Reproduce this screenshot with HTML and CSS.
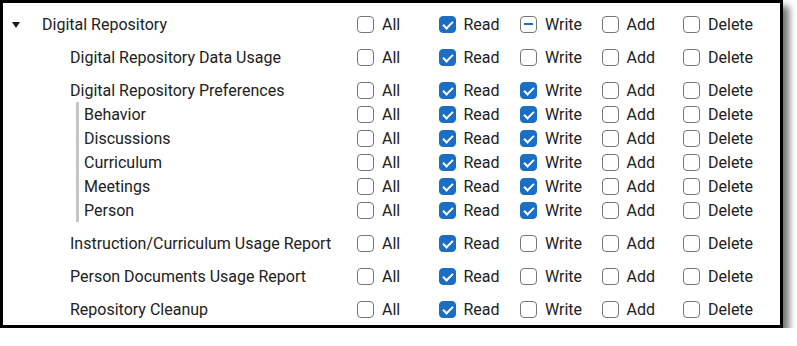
FILE: index.html
```html
<!DOCTYPE html>
<html lang="en">
<head>
    <meta charset="UTF-8">
    <meta name="viewport" content="width=device-width, initial-scale=1.0">
    <link rel="stylesheet" href="styles.css">
</head>
<body>
    <div class="card">
        <!-- Digital Repository -->
        <div class="row top">
            <div class="name lvl1"><span class="caret"></span>Digital Repository</div>
            <div class="perm"><span class="box"></span>All</div>
            <div class="perm"><span class="box checked"></span>Read</div>
            <div class="perm"><span class="box partial"></span>Write</div>
            <div class="perm"><span class="box"></span>Add</div>
            <div class="perm"><span class="box"></span>Delete</div>
        </div>

        <div class="row top">
            <div class="name lvl2">Digital Repository Data Usage</div>
            <div class="perm"><span class="box"></span>All</div>
            <div class="perm"><span class="box checked"></span>Read</div>
            <div class="perm"><span class="box"></span>Write</div>
            <div class="perm"><span class="box"></span>Add</div>
            <div class="perm"><span class="box"></span>Delete</div>
        </div>

        <div class="row top">
            <div class="name lvl2">Digital Repository Preferences</div>
            <div class="perm"><span class="box"></span>All</div>
            <div class="perm"><span class="box checked"></span>Read</div>
            <div class="perm"><span class="box checked"></span>Write</div>
            <div class="perm"><span class="box"></span>Add</div>
            <div class="perm"><span class="box"></span>Delete</div>
        </div>

        <!-- Preferences children -->
        <div class="children">
            <div class="row">
                <div class="name lvl3">Behavior</div>
                <div class="perm"><span class="box"></span>All</div>
                <div class="perm"><span class="box checked"></span>Read</div>
                <div class="perm"><span class="box checked"></span>Write</div>
                <div class="perm"><span class="box"></span>Add</div>
                <div class="perm"><span class="box"></span>Delete</div>
            </div>
            <div class="row">
                <div class="name lvl3">Discussions</div>
                <div class="perm"><span class="box"></span>All</div>
                <div class="perm"><span class="box checked"></span>Read</div>
                <div class="perm"><span class="box checked"></span>Write</div>
                <div class="perm"><span class="box"></span>Add</div>
                <div class="perm"><span class="box"></span>Delete</div>
            </div>
            <div class="row">
                <div class="name lvl3">Curriculum</div>
                <div class="perm"><span class="box"></span>All</div>
                <div class="perm"><span class="box checked"></span>Read</div>
                <div class="perm"><span class="box checked"></span>Write</div>
                <div class="perm"><span class="box"></span>Add</div>
                <div class="perm"><span class="box"></span>Delete</div>
            </div>
            <div class="row">
                <div class="name lvl3">Meetings</div>
                <div class="perm"><span class="box"></span>All</div>
                <div class="perm"><span class="box checked"></span>Read</div>
                <div class="perm"><span class="box checked"></span>Write</div>
                <div class="perm"><span class="box"></span>Add</div>
                <div class="perm"><span class="box"></span>Delete</div>
            </div>
            <div class="row">
                <div class="name lvl3">Person</div>
                <div class="perm"><span class="box"></span>All</div>
                <div class="perm"><span class="box checked"></span>Read</div>
                <div class="perm"><span class="box checked"></span>Write</div>
                <div class="perm"><span class="box"></span>Add</div>
                <div class="perm"><span class="box"></span>Delete</div>
            </div>
        </div>

        <div class="row top">
            <div class="name lvl2">Instruction/Curriculum Usage Report</div>
            <div class="perm"><span class="box"></span>All</div>
            <div class="perm"><span class="box checked"></span>Read</div>
            <div class="perm"><span class="box"></span>Write</div>
            <div class="perm"><span class="box"></span>Add</div>
            <div class="perm"><span class="box"></span>Delete</div>
        </div>

        <div class="row top">
            <div class="name lvl2">Person Documents Usage Report</div>
            <div class="perm"><span class="box"></span>All</div>
            <div class="perm"><span class="box checked"></span>Read</div>
            <div class="perm"><span class="box"></span>Write</div>
            <div class="perm"><span class="box"></span>Add</div>
            <div class="perm"><span class="box"></span>Delete</div>
        </div>

        <div class="row top">
            <div class="name lvl2">Repository Cleanup</div>
            <div class="perm"><span class="box"></span>All</div>
            <div class="perm"><span class="box checked"></span>Read</div>
            <div class="perm"><span class="box"></span>Write</div>
            <div class="perm"><span class="box"></span>Add</div>
            <div class="perm"><span class="box"></span>Delete</div>
        </div>
    </div>
</body>
</html>
```

FILE: styles.css
```css
body {
    margin: 0;
    background: #fff;
    font-family: Roboto, "Liberation Sans", sans-serif;
    font-size: 16px;
    color: #212121;
}

.card {
    width: 783px;
    box-sizing: border-box;
    border: 3px solid #000;
    padding: 9px 0 4px;
    background: #fff;
    box-shadow: 6px 6px 7px rgba(0, 0, 0, 0.55);
}

.row {
    display: flex;
    align-items: center;
    height: 24px;
}

.row.top + .row.top,
.children + .row.top {
    margin-top: 9px;
}

.name {
    flex: 0 0 354px;
    box-sizing: border-box;
    display: flex;
    align-items: center;
    white-space: nowrap;
    padding-top: 1px;
}

.lvl1 {
    padding-left: 9px;
}

.lvl2 {
    padding-left: 67px;
}

.children {
    margin-left: 73px;
    border-left: 3px solid #c6c6c6;
}

.lvl3 {
    flex-basis: 278px;
    padding-left: 5px;
}

.caret {
    width: 0;
    height: 0;
    border-left: 4px solid transparent;
    border-right: 4px solid transparent;
    border-top: 6px solid #1a1a1a;
    margin-right: 22px;
}

.perm {
    flex: 0 0 81.5px;
    display: flex;
    align-items: center;
    padding-top: 1px;
}

.perm:last-child {
    flex: 1;
}

.box {
    position: relative;
    width: 17px;
    height: 17px;
    box-sizing: border-box;
    border: 1px solid #777;
    border-radius: 4px;
    background: #fff;
    margin-right: 8px;
    margin-top: -1px;
}

.box.checked {
    background: #1b6ec2;
    border-color: #1b6ec2;
}

.box.checked::after {
    content: '';
    position: absolute;
    left: 5px;
    top: 2px;
    width: 4px;
    height: 8px;
    border-right: 2px solid #fff;
    border-bottom: 2px solid #fff;
    transform: rotate(45deg);
}

.box.partial::after {
    content: '';
    position: absolute;
    left: 3px;
    right: 3px;
    top: 6px;
    height: 2px;
    background: #1b6ec2;
}
```
